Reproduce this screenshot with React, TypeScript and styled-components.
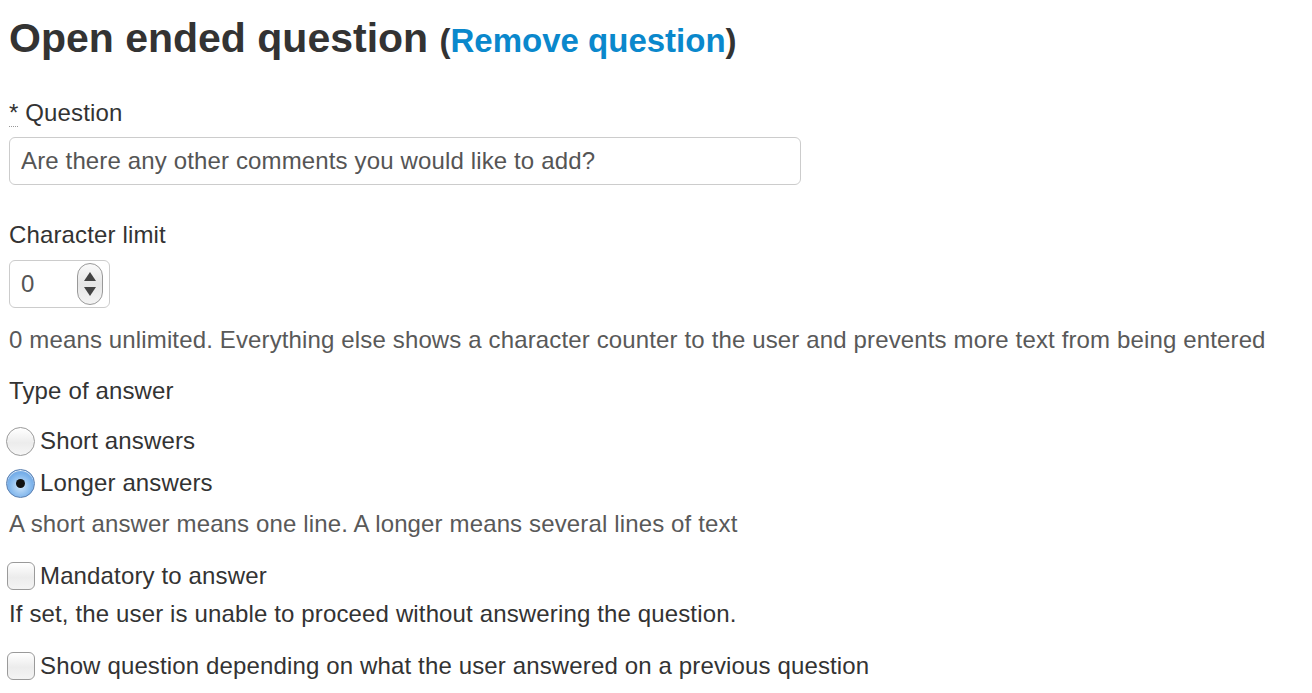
import React from "react";
import styled, { createGlobalStyle } from "styled-components";

const Global = createGlobalStyle`
  html, body { margin: 0; padding: 0; background: #fff; }
  body { font-family: "Liberation Sans", Arial, Helvetica, sans-serif; color: #333; }
`;

const Page = styled.div`
  display: flex;
  flex-direction: column;
  align-items: flex-start;
  padding: 13px 0 0 9px;
  letter-spacing: 0.14px;
`;

const Heading = styled.h1`
  margin: 0;
  font-size: 41px;
  line-height: 50px;
  font-weight: bold;
  color: #333;
  letter-spacing: 0;
`;

const Paren = styled.span`
  font-size: 33px;
`;

const Link = styled.a`
  color: #0a88cc;
  text-decoration: none;
`;

const Label = styled.label<{ $mt: number }>`
  display: block;
  margin-top: ${(p) => p.$mt}px;
  font-size: 24px;
  line-height: 30px;
  color: #333;
`;

const Req = styled.abbr`
  text-decoration: none;
  border-bottom: 1px dotted #999;
  cursor: help;
`;

const TextInput = styled.input`
  box-sizing: border-box;
  margin-top: 9px;
  width: 792px;
  height: 48px;
  padding: 0 11px;
  border: 1px solid #ccc;
  border-radius: 6px;
  font-family: inherit;
  font-size: 24px;
  letter-spacing: 0.14px;
  color: #555;
  background: #fff;
  outline: none;
`;

const NumberBox = styled.div`
  box-sizing: border-box;
  margin-top: 10px;
  width: 101px;
  height: 48px;
  display: flex;
  align-items: center;
  border: 1px solid #ccc;
  border-radius: 6px;
  padding: 0 6px 0 11px;
`;

const NumberValue = styled.input`
  flex: 1;
  min-width: 0;
  border: none;
  outline: none;
  padding: 0;
  font-family: inherit;
  font-size: 24px;
  color: #555;
  background: transparent;
`;

const Spinner = styled.div`
  box-sizing: border-box;
  width: 26px;
  height: 42px;
  border: 1px solid #999;
  border-radius: 13px;
  background: linear-gradient(#fafafa, #e6e6e6 50%, #f4f4f4);
  display: flex;
  flex-direction: column;
  align-items: center;
  justify-content: space-between;
  padding: 8px 0;
`;

const Tri = styled.span<{ $up?: boolean }>`
  width: 0;
  height: 0;
  border-left: 6px solid transparent;
  border-right: 6px solid transparent;
  ${(p) =>
    p.$up
      ? "border-bottom: 9px solid #444;"
      : "border-top: 9px solid #444;"}
`;

const Help = styled.p<{ $mt: number; $dark?: boolean }>`
  margin: ${(p) => p.$mt}px 0 0;
  font-size: 24px;
  line-height: 30px;
  color: ${(p) => (p.$dark ? "#333" : "#595959")};
`;

const Option = styled.label<{ $mt: number }>`
  display: flex;
  align-items: center;
  margin-top: ${(p) => p.$mt}px;
  margin-left: -3px;
  font-size: 24px;
  line-height: 30px;
  color: #333;
  gap: 5px;
`;

const Radio = styled.input`
  appearance: none;
  margin: 0;
  flex: none;
  box-sizing: border-box;
  width: 29px;
  height: 29px;
  border-radius: 50%;
  border: 1px solid #9a9a9a;
  background: linear-gradient(#ffffff, #ececec 55%, #f6f6f6);
  box-shadow: inset 0 1px 1px rgba(255, 255, 255, 0.9);
  position: relative;
  &:checked {
    border-color: #5a7fb0;
    background: radial-gradient(circle at 50% 60%, #cfe6fb 0%, #7fb5ec 55%, #4f8fd9 100%);
  }
  &:checked::after {
    content: "";
    position: absolute;
    left: 50%;
    top: 50%;
    width: 9px;
    height: 9px;
    margin: -4.5px 0 0 -4.5px;
    border-radius: 50%;
    background: #111;
  }
`;

const Check = styled.input`
  appearance: none;
  margin: 0 0 0 1px;
  flex: none;
  box-sizing: border-box;
  width: 28px;
  height: 28px;
  border-radius: 6px;
  border: 1px solid #9a9a9a;
  background: linear-gradient(#ffffff, #ececec 55%, #f4f4f4);
`;

export default function App() {
  return (
    <>
      <Global />
      <Page>
        <Heading>
          Open ended question <Paren>(<Link href="#">Remove question</Link>)</Paren>
        </Heading>

        <Label $mt={32}>
          <Req title="required">*</Req> Question
        </Label>
        <TextInput defaultValue="Are there any other comments you would like to add?" />

        <Label $mt={35}>Character limit</Label>
        <NumberBox>
          <NumberValue defaultValue="0" />
          <Spinner>
            <Tri $up />
            <Tri />
          </Spinner>
        </NumberBox>
        <Help $mt={17}>
          0 means unlimited. Everything else shows a character counter to the user and prevents more text from being entered
        </Help>

        <Label $mt={21}>Type of answer</Label>
        <Option $mt={20}>
          <Radio type="radio" name="type" />
          Short answers
        </Option>
        <Option $mt={12}>
          <Radio type="radio" name="type" defaultChecked />
          Longer answers
        </Option>
        <Help $mt={11}>A short answer means one line. A longer means several lines of text</Help>

        <Option $mt={22}>
          <Check type="checkbox" />
          Mandatory to answer
        </Option>
        <Help $mt={8} $dark>
          If set, the user is unable to proceed without answering the question.
        </Help>
        <Option $mt={22}>
          <Check type="checkbox" />
          Show question depending on what the user answered on a previous question
        </Option>
      </Page>
    </>
  );
}
